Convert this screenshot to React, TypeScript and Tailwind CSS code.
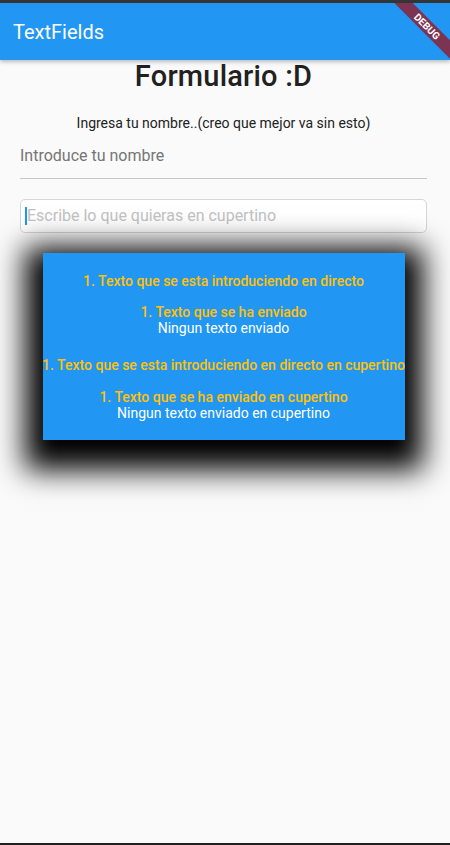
import React from "react";

const font = { fontFamily: "Roboto, 'Noto Sans', sans-serif" };

function DebugBanner() {
  return (
    <div className="pointer-events-none absolute right-0 top-[3px] z-20 h-[80px] w-[80px] overflow-hidden">
      <div className="absolute left-[7px] top-[17px] flex h-[13px] w-[100px] rotate-45 items-center justify-center bg-[#7c3452]">
        <span className="text-[10px] font-bold leading-none text-white">DEBUG</span>
      </div>
    </div>
  );
}

export default function App() {
  return (
    <div style={font} className="relative flex h-[845px] w-[450px] flex-col overflow-hidden bg-[#fafafa]">
      <div className="h-[3px] bg-[#363636]" />
      <header className="z-10 flex h-[57px] items-center bg-[#2196f3] px-[13px] shadow-[0_2px_4px_rgba(0,0,0,0.25)]">
        <h1 className="text-[20px] font-normal leading-6 text-white">TextFields</h1>
      </header>
      <DebugBanner />

      <main className="flex w-[447px] flex-1 flex-col items-center">
        <h2 className="text-[29px] font-medium leading-[33px] tracking-[0.2px] text-[#212121]">Formulario :D</h2>
        <p className="mt-[22px] text-[14px] leading-4 text-[#212121]">
          Ingresa tu nombre..(creo que mejor va sin esto)
        </p>

        <div className="mt-[17px] w-[407px] border-b border-[#c6c6c6] pb-[14px] text-[16px] leading-4">
          <span className="text-[#757575]">Introduce tu nombre</span>
        </div>

        <div className="mt-[20px] flex h-[34px] w-[407px] items-center rounded-[5px] border border-[#d6d6d6] bg-white pl-[4px] text-[16px] leading-4">
          <span className="h-[18px] w-[2px] bg-[#2196f3]" />
          <span className="text-[#c2c2c2]">Escribe lo que quieras en cupertino</span>
        </div>

        <section className="mt-[20px] flex w-[362px] flex-col items-center bg-[#2196f3] pb-[19px] pt-[20px] text-center text-[14px] leading-4 shadow-[0_12px_28px_18px_#000]">
          <p className="font-medium text-[#ffc107]">1. Texto que se esta introduciendo en directo</p>
          <p className="mt-[15px] font-medium text-[#ffc107]">1. Texto que se ha enviado</p>
          <p className="text-white">Ningun texto enviado</p>
          <p className="mt-[21px] whitespace-nowrap font-medium text-[#ffc107]">
            1. Texto que se esta introduciendo en directo en cupertino
          </p>
          <p className="mt-[16px] font-medium text-[#ffc107]">1. Texto que se ha enviado en cupertino</p>
          <p className="text-white">Ningun texto enviado en cupertino</p>
        </section>
      </main>

      <div className="h-[2px] bg-[#202020]" />
    </div>
  );
}
